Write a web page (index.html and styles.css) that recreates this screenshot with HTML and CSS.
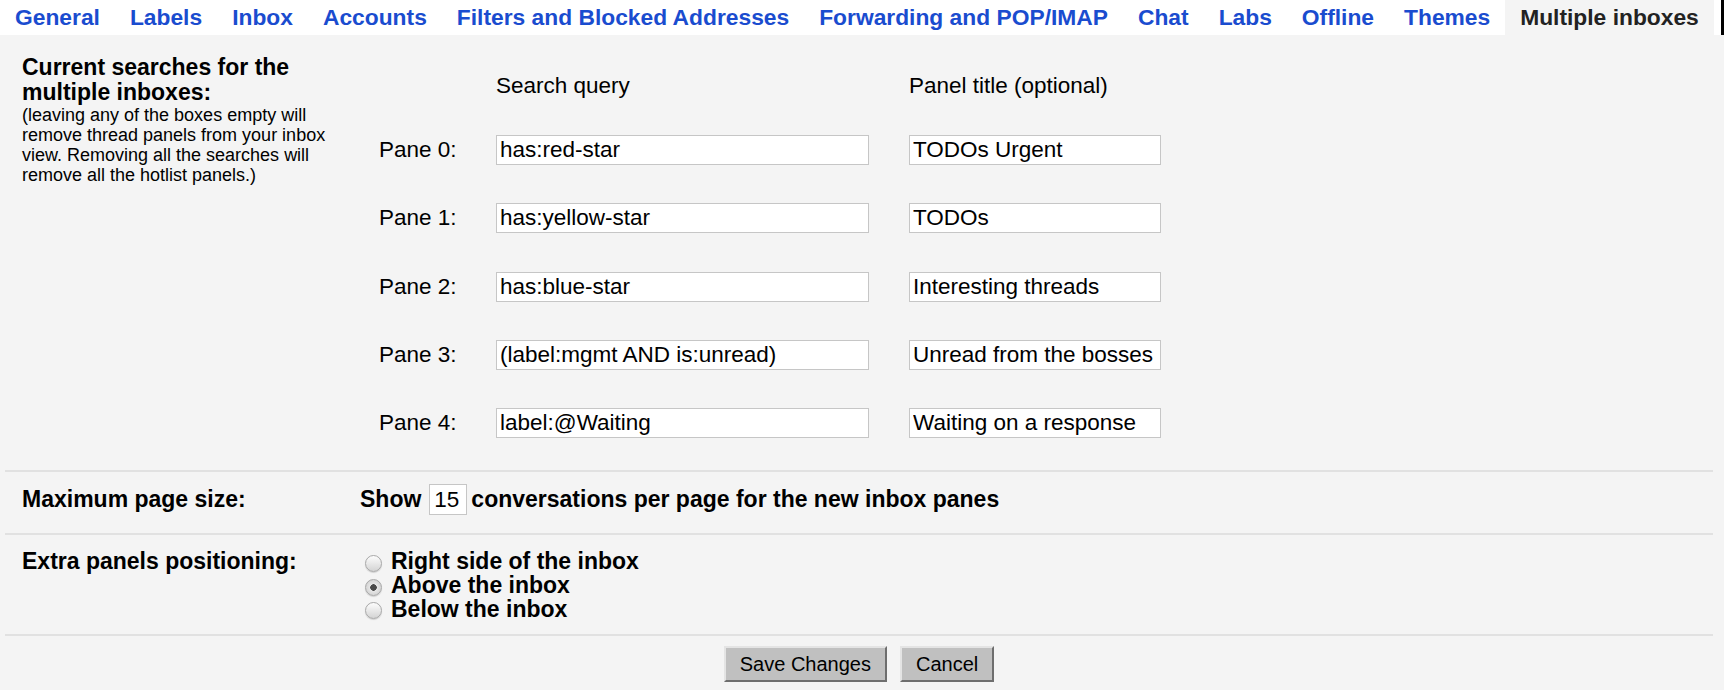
FILE: index.html
```html
<!DOCTYPE html>
<html>
<head>
  <meta charset="utf-8">
  <title>Settings - Multiple inboxes</title>
  <link rel="stylesheet" href="styles.css">
</head>
<body>
  <!-- Settings tabs -->
  <div class="tabs">
    <a class="tab" href="#">General</a>
    <a class="tab" href="#">Labels</a>
    <a class="tab" href="#">Inbox</a>
    <a class="tab" href="#">Accounts</a>
    <a class="tab" href="#">Filters and Blocked Addresses</a>
    <a class="tab" href="#">Forwarding and POP/IMAP</a>
    <a class="tab" href="#">Chat</a>
    <a class="tab" href="#">Labs</a>
    <a class="tab" href="#">Offline</a>
    <a class="tab" href="#">Themes</a>
    <span class="tab tab-active">Multiple inboxes</span>
  </div>

  <div class="settings">
    <!-- Searches for each pane -->
    <div class="section section-searches">
      <div class="section-label">
        <div class="heading">Current searches for the multiple inboxes:</div>
        <div class="hint">(leaving any of the boxes empty will remove thread panels from your inbox view. Removing all the searches will remove all the hotlist panels.)</div>
      </div>
      <div class="panes">
        <div class="pane-row pane-head">
          <span></span>
          <span>Search query</span>
          <span>Panel title (optional)</span>
        </div>
        <div class="pane-list">
          <div class="pane-row">
            <label for="q0">Pane 0:</label>
            <input class="field field-query" id="q0" value="has:red-star">
            <input class="field field-title" value="TODOs Urgent">
          </div>
          <div class="pane-row">
            <label for="q1">Pane 1:</label>
            <input class="field field-query" id="q1" value="has:yellow-star">
            <input class="field field-title" value="TODOs">
          </div>
          <div class="pane-row">
            <label for="q2">Pane 2:</label>
            <input class="field field-query" id="q2" value="has:blue-star">
            <input class="field field-title" value="Interesting threads">
          </div>
          <div class="pane-row">
            <label for="q3">Pane 3:</label>
            <input class="field field-query" id="q3" value="(label:mgmt AND is:unread)">
            <input class="field field-title" value="Unread from the bosses">
          </div>
          <div class="pane-row">
            <label for="q4">Pane 4:</label>
            <input class="field field-query" id="q4" value="label:@Waiting">
            <input class="field field-title" value="Waiting on a response">
          </div>
        </div>
      </div>
    </div>

    <!-- Page size -->
    <div class="section section-row">
      <div class="row-label">Maximum page size:</div>
      <div class="page-size">
        <span>Show</span>
        <input class="field field-small" value="15">
        <span>conversations per page for the new inbox panes</span>
      </div>
    </div>

    <!-- Position of the extra panels -->
    <div class="section section-row section-top">
      <div class="row-label">Extra panels positioning:</div>
      <div class="radio-list">
        <label class="radio-option"><input type="radio" name="pos"><span>Right side of the inbox</span></label>
        <label class="radio-option"><input type="radio" name="pos" checked><span>Above the inbox</span></label>
        <label class="radio-option"><input type="radio" name="pos"><span>Below the inbox</span></label>
      </div>
    </div>

    <div class="actions">
      <button class="btn">Save Changes</button>
      <button class="btn">Cancel</button>
    </div>
  </div>
</body>
</html>
```

FILE: styles.css
```css
/* Page: light grey settings background */
body {
  margin: 0;
  background-color: #f4f4f4;
  font-family: "Liberation Sans", Arial, sans-serif;
  font-size: 22.5px;
  color: #000;
}

/* Tab strip along the top */
.tabs {
  display: flex;
  height: 35px;
  background-color: #fff;
  border-right: 3px solid #000;
  white-space: nowrap;
  overflow: hidden;
}
.tab {
  padding: 0 15px;
  line-height: 35px;
  font-size: 22.8px;
  font-weight: bold;
  color: #1a4ccf;
  text-decoration: none;
}
.tab-active {
  background-color: #f4f4f4;
  color: #222;
}

.settings {
  margin: 0 11px 0 5px;
}

.section {
  display: grid;
  grid-template-columns: 357px auto;
  padding-left: 17px;
}
.section-searches {
  padding-top: 20px;
  padding-bottom: 32px;
}
.section-row {
  grid-template-columns: 338px auto;
  align-items: center;
  border-top: 2px solid #e1e1e1;
  padding-top: 12px;
  padding-bottom: 18px;
}
.section-top {
  align-items: start;
  padding-top: 15px;
  padding-bottom: 13px;
  border-bottom: 2px solid #e1e1e1;
}

/* Left description column */
.heading {
  width: 320px;
  font-size: 23px;
  line-height: 25px;
  font-weight: bold;
}
.hint {
  width: 320px;
  font-size: 18px;
  line-height: 20px;
}

/* Pane table */
.panes {
  margin-top: 18px;
}
.pane-row {
  display: grid;
  grid-template-columns: 117px 413px 252px;
  align-items: center;
}
.pane-head {
  line-height: 26px;
  margin-bottom: 36px;
}
.pane-list {
  display: flex;
  flex-direction: column;
  gap: 38.25px;
}

.field {
  box-sizing: border-box;
  height: 30px;
  padding: 0 3px;
  border: 1px solid #c6c6c6;
  background-color: #fff;
  font-family: inherit;
  font-size: 22.5px;
  font-weight: normal;
  color: #000;
  outline: none;
}
.field-query {
  width: 373px;
}
.field-title {
  width: 252px;
}
.field-small {
  width: 38px;
  height: 31px;
  padding: 0 4px;
  margin: 0 4px 0 8px;
}

.row-label {
  font-size: 23px;
  font-weight: bold;
  line-height: 23.7px;
}
.page-size {
  display: flex;
  align-items: center;
  font-size: 23px;
  font-weight: bold;
}

/* Radio choices */
.radio-list {
  display: flex;
  flex-direction: column;
  font-size: 23px;
  font-weight: bold;
}
.radio-option {
  display: flex;
  align-items: center;
  height: 23.7px;
}
.radio-option input {
  appearance: none;
  box-sizing: border-box;
  width: 17px;
  height: 17px;
  margin: 3px 9px 0 5px;
  border: 1px solid #a8a8a8;
  border-radius: 50%;
  background: linear-gradient(#fdfdfd, #d4d4d4);
  box-shadow: 0 1px 1px rgba(0, 0, 0, 0.15);
}
.radio-option input:checked {
  background: radial-gradient(circle, #4a4a4a 0 3px, #e6e6e6 3.5px, #c8c8c8 100%);
}

/* Save / cancel buttons */
.actions {
  display: flex;
  justify-content: center;
  gap: 13px;
  margin-top: 10px;
}
.btn {
  height: 36px;
  padding: 0 14px;
  background-color: #c0c0c0;
  border: 2px solid;
  border-color: #e4e4e4 #6e6e6e #6e6e6e #e4e4e4;
  font-family: "Liberation Sans", Arial, sans-serif;
  font-size: 20px;
  color: #000;
}
```
